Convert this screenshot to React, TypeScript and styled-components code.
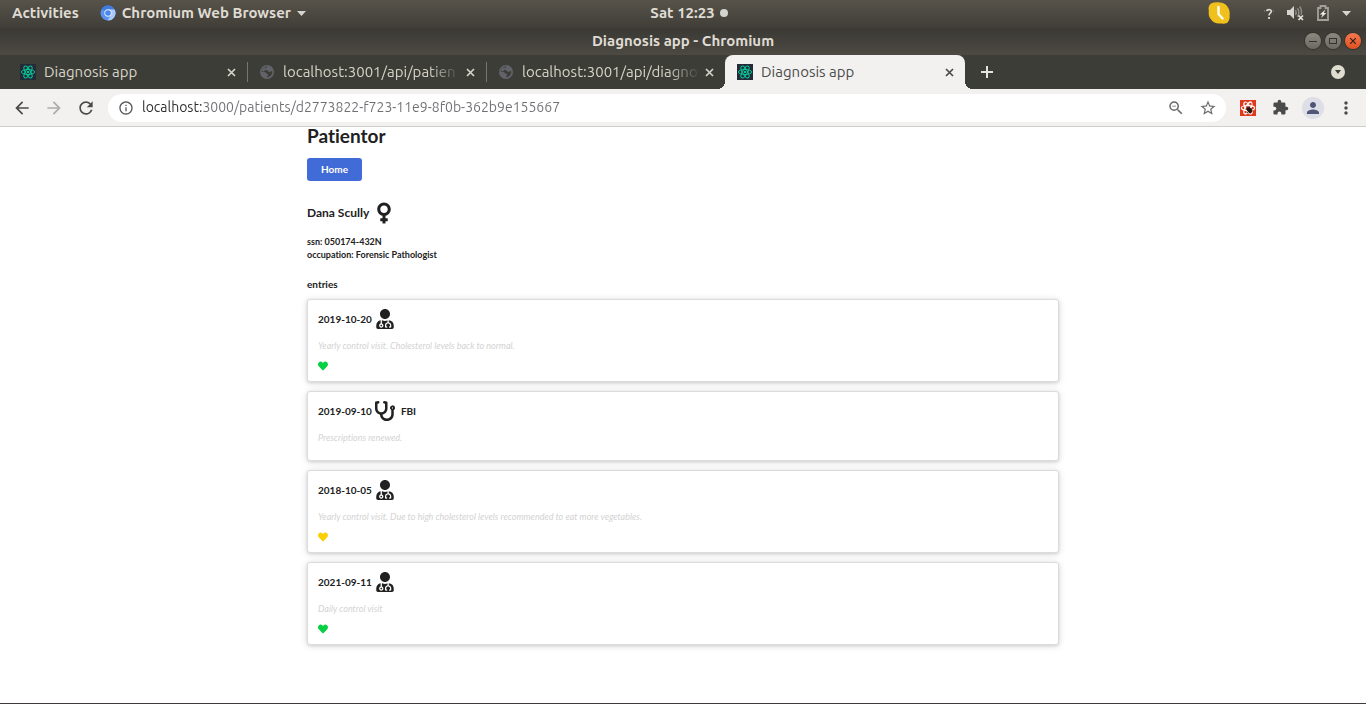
import React from "react";
import styled, { createGlobalStyle } from "styled-components";
import { FaHeart, FaStethoscope, FaUserMd, FaVenus } from "react-icons/fa";
import {
  MdArrowBack,
  MdArrowForward,
  MdExtension,
  MdInfoOutline,
  MdMoreVert,
  MdPerson,
  MdRefresh,
  MdStarBorder,
  MdZoomOut,
} from "react-icons/md";

const GlobalStyle = createGlobalStyle`
  *, *::before, *::after { box-sizing: border-box; }
  body { margin: 0; background: #fff; }
  button, input { font: inherit; color: inherit; }
  svg { display: block; flex: none; }
`;

const uiFont = `Ubuntu, "Noto Sans", sans-serif`;

const Screen = styled.div`
  display: flex;
  flex-direction: column;
  min-height: 100vh;
  border-bottom: 1px solid #403a3a;
  font-family: ${uiFont};
`;

/* ---------- desktop panel and window title ---------- */

const PlainButton = styled.button`
  display: flex;
  align-items: center;
  justify-content: center;
  flex: none;
  padding: 0;
  border: 0;
  background: none;
  cursor: pointer;
`;

const SystemBar = styled.header`
  display: grid;
  grid-template-columns: 1fr auto 1fr;
  align-items: center;
  height: 28px;
  padding: 0 15px 2px 12px;
  background: linear-gradient(#57534a, #403e38);
  color: #dfdbd2;
  font-size: 15px;
  font-weight: 700;
  line-height: 20px;
  white-space: nowrap;
`;

const SystemGroup = styled.div<{ $end?: boolean }>`
  display: flex;
  align-items: center;
  justify-content: ${(p) => (p.$end ? "flex-end" : "flex-start")};
  gap: ${(p) => (p.$end ? "13px" : "21px")};
`;

const AppMenu = styled(PlainButton)`
  gap: 6px;
`;

const Clock = styled(PlainButton)`
  gap: 5px;
  padding-left: 15px;
`;

const Dot = styled.span`
  width: 8px;
  height: 8px;
  border-radius: 50%;
  background: #d6d4ce;
`;

const TrackerButton = styled(PlainButton)`
  margin-right: 21px;
`;

const TitleBar = styled.div`
  display: grid;
  grid-template-columns: 1fr auto 1fr;
  align-items: center;
  height: 27px;
  padding: 0 5px 2px;
  background: linear-gradient(#3a3934, #4d4943);
  color: #dfdbd2;
  font-size: 15px;
  font-weight: 700;
  line-height: 20px;
`;

const WindowTitle = styled.span`
  grid-column: 2;
`;

const WindowButtons = styled.div`
  display: flex;
  justify-content: flex-end;
  gap: 4px;
`;

const WindowButton = styled(PlainButton)<{ $close?: boolean }>`
  width: 16px;
  height: 16px;
  border-radius: 50%;
  background: ${(p) =>
    p.$close
      ? "linear-gradient(#f4794f, #e0501f)"
      : "linear-gradient(#8b8980, #6b6962)"};
  box-shadow: 0 0 1px 1px #35332e;
`;

/* ---------- tabs ---------- */

const TabStrip = styled.nav`
  display: flex;
  align-items: center;
  height: 34px;
  padding: 0 20px 0 8px;
  background: #3d3d37;
  color: #d6d4c8;
`;

const Tab = styled.div<{ $active?: boolean; $divider?: boolean }>`
  position: relative;
  display: flex;
  align-items: center;
  flex: 0 1 ${(p) => (p.$active ? "240px" : "239px")};
  min-width: 0;
  height: 34px;
  padding: 0 9px 0 12px;
  border-radius: 8px 8px 0 0;
  background: ${(p) => (p.$active ? "#f2f1f0" : "transparent")};
  color: ${(p) => (p.$active ? "#4c4c4c" : "inherit")};

  ${(p) =>
    p.$divider &&
    `&::after {
      content: "";
      position: absolute;
      top: 7px;
      right: -1px;
      width: 1px;
      height: 20px;
      background: #77766f;
    }`}

  ${(p) =>
    p.$active &&
    `&::before, &::after {
      content: "";
      position: absolute;
      bottom: 0;
      width: 8px;
      height: 8px;
    }
    &::before {
      right: 100%;
      background: radial-gradient(circle at 0 0, transparent 8px, #f2f1f0 8px);
    }
    &::after {
      left: 100%;
      background: radial-gradient(circle at 100% 0, transparent 8px, #f2f1f0 8px);
    }`}
`;

const TabTitle = styled.a<{ $fade?: boolean }>`
  flex: 1;
  min-width: 0;
  margin: 0 2px 0 8px;
  overflow: hidden;
  color: inherit;
  font-size: 15px;
  line-height: 20px;
  text-decoration: none;
  white-space: nowrap;
  ${(p) =>
    p.$fade &&
    `mask-image: linear-gradient(to left, transparent, #000 32px);`}
`;

const TabClose = styled(PlainButton)`
  width: 14px;
  height: 16px;
`;

const NewTab = styled(PlainButton)`
  width: 28px;
  height: 28px;
  margin-left: 8px;
  color: #e4e2da;
`;

const TabSearch = styled(PlainButton)`
  width: 16px;
  height: 16px;
  margin-left: auto;
`;

/* ---------- toolbar ---------- */

const Toolbar = styled.div`
  display: flex;
  align-items: center;
  gap: 12px;
  height: 38px;
  padding: 0 10px 0 12px;
  border-bottom: 1px solid #cfcdca;
  background: #f2f1f0;
  color: #4a4a4a;
`;

const ToolButton = styled(PlainButton)<{ $muted?: boolean }>`
  width: 20px;
  height: 20px;
  color: ${(p) => (p.$muted ? "#adacab" : "inherit")};
`;

const AddressBar = styled.form`
  display: flex;
  align-items: center;
  flex: 1;
  gap: 12px;
  min-width: 0;
  height: 28px;
  padding: 0 8px 0 10px;
  border-radius: 14px;
  background: #fff;
  color: #6b6b6b;
`;

const SiteInfo = styled(PlainButton)`
  color: #55585c;
`;

/* The host part of the address is drawn darker than the rest. */
const AddressInput = styled.input`
  flex: 1;
  min-width: 0;
  height: 22px;
  margin-left: -4px;
  padding: 0 0 2px;
  border: 0;
  outline: 0;
  background: linear-gradient(to right, #2c2c2c 62px, #6f6f73 62px);
  background-clip: text;
  -webkit-background-clip: text;
  color: transparent;
  font-size: 14px;
  line-height: 20px;
`;

const Extensions = styled.div`
  display: flex;
  align-items: center;
  gap: 12px;
`;

const Avatar = styled(PlainButton)`
  width: 22px;
  height: 22px;
  border-radius: 50%;
  background: #dddee6;
  color: #50557a;
`;

/* ---------- page ---------- */

const Page = styled.main`
  flex: 1;
  width: 100%;
  max-width: 768px;
  margin: 0 auto;
  padding: 0 8px 56px;
  color: #212121;
  font-family: Lato, sans-serif;
  font-size: 10px;
  line-height: 13px;
  font-variant-ligatures: none;
`;

const Brand = styled.h1`
  margin: 0 0 14px;
  font-size: 19px;
  font-weight: 700;
  line-height: 17px;
`;

const HomeButton = styled.button`
  display: block;
  height: 23px;
  padding: 0 14px;
  border: 0;
  border-radius: 3px;
  background: #416bd6;
  color: #fff;
  font-weight: 700;
  cursor: pointer;
`;

const PatientName = styled.h2`
  display: flex;
  align-items: center;
  gap: 3px;
  height: 24px;
  margin: 20px 0 10px;
  font-size: 12px;
  font-weight: 700;
  line-height: 24px;
`;

const IconBox = styled.span<{ $width: number }>`
  display: flex;
  justify-content: center;
  width: ${(p) => p.$width}px;
`;

const Details = styled.p`
  margin: 0;
  font-size: 9px;
  font-weight: 700;
`;

const EntriesTitle = styled.h3`
  margin: 17px 0 8px;
  font-size: 10px;
  font-weight: 700;
`;

const EntryList = styled.div`
  display: flex;
  flex-direction: column;
  gap: 9px;
`;

const EntryCard = styled.article`
  padding: 9px 10px 10px;
  border: 1px solid #dcdcdc;
  border-radius: 3px;
  background: #fff;
  box-shadow: 0 1px 3px rgba(34, 36, 38, 0.12),
    0 1px 7px rgba(34, 36, 38, 0.15);
`;

const EntryHeader = styled.h4`
  display: flex;
  align-items: center;
  gap: 3px;
  height: 20px;
  margin: 0 0 10px;
  font-size: 10px;
  font-weight: 700;
`;

const Employer = styled.span`
  padding-left: 3px;
`;

const EntryText = styled.p`
  margin: 0;
  padding-bottom: 5px;
  color: #d3d3d3;
  font-size: 9px;
  font-style: italic;
  line-height: 14px;
`;

const Health = styled.div<{ $color: string }>`
  padding-top: 3px;
  color: ${(p) => p.$color};
`;

/* ---------- drawings ---------- */

const ChromiumIcon = () => (
  <svg width="16" height="16" viewBox="0 0 16 16">
    <circle cx="8" cy="8" r="7.5" fill="#5a93ee" />
    <path d="M8 8 1.5 4.2A7.5 7.5 0 0 1 14.5 4.4H8z" fill="#3f7be0" />
    <path d="M8 4.4h6.6A7.5 7.5 0 0 1 7.6 15.5L11 9.8z" fill="#a9c9f8" />
    <circle cx="8" cy="8" r="3.7" fill="#e3eefd" />
    <circle cx="8" cy="8" r="2.8" fill="#4c86ea" />
  </svg>
);

const Caret = () => (
  <svg width="9" height="5" viewBox="0 0 9 5">
    <path d="M0 0h9L4.500 5z" fill="#d6d4ce" />
  </svg>
);

const TrackerIcon = () => (
  <svg width="22" height="22" viewBox="0 0 22 22">
    <path
      d="M3 1.500C6 .2 9 0 12 .6c4 .3 6.500 2 8 5 1.500 2 2 5 1.600 8 .4 3-.6 6-2.600 7.400-2 1-4 .8-7 .6-4 .2-7-1-9-4C.8 15 .4 12 .8 9 .2 6 .5 3 3 1.500z"
      fill="#f0c11c"
    />
    <path
      d="M10.500 5v7l4 4.500"
      fill="none"
      stroke="#fffdf2"
      strokeWidth="2.400"
      strokeLinecap="round"
      strokeLinejoin="round"
    />
  </svg>
);

const HelpIcon = () => (
  <svg width="10" height="12" viewBox="0 0 10 12">
    <path
      d="M2.800 4.200C3 2.200 7.400 2 7.300 4.500 7.200 6.300 5 6.200 5 8.500"
      fill="none"
      stroke="#d6d4ce"
      strokeWidth="1.700"
    />
    <rect x="4.100" y="10" width="1.900" height="2" fill="#d6d4ce" />
    <path d="M0 4h1M9 4h1" stroke="#8f8c85" />
  </svg>
);

const VolumeIcon = () => (
  <svg width="17" height="16" viewBox="0 0 17 16">
    <path d="M0 5h3l4-4v13l-4-4H0z" fill="#d6d4ce" />
    <path
      d="M8.500 5q1.500 2.500 0 5M10.500 3.200q2.600 4.300 0 8.600M12.700 1.500q3 4.500 1 8.500"
      fill="none"
      stroke="#8f8c85"
      strokeWidth="1.400"
    />
    <path d="m11.500 10.500 4.500 4.500m0-4.500L11.500 15" stroke="#e6e4de" strokeWidth="1.700" />
  </svg>
);

const BatteryIcon = () => (
  <svg width="12" height="16" viewBox="0 0 12 16">
    <path
      d="M1 3h2.500V1h5v2H11v12H1z"
      fill="none"
      stroke="#a3a09a"
      strokeWidth="1.800"
    />
    <path d="M8.500 4.500 2.800 9.500h2.700l-1.500 3.500 5.300-5H6.800z" fill="#f0eee8" />
  </svg>
);

const CrossIcon = ({ size = 9 }: { size?: number }) => (
  <svg width={size} height={size} viewBox="0 0 9 9">
    <path d="m1 1 7 7m0-7L1 8" stroke="currentColor" strokeWidth="1.700" />
  </svg>
);

const GlobeIcon = () => (
  <svg width="16" height="16" viewBox="0 0 16 16">
    <circle cx="8" cy="8" r="7" fill="#62636a" />
    <path
      d="M8.500 2.600C8 4 6.600 3.800 6.400 5.200c-.1 1 1.400.9 2.200 1.200.9.400.5 1.400 1.500 1.500 1.300.1 1.700-.9 3.300-.6.100 2-.8 3.800-2.400 4.900-.9.700-2 1-3.200 1 .2-1.300 1.300-1.200 1.300-2.300 0-1-1-.7-1.700-1.300C6.700 9 6.500 8.200 5.400 8.100L2.500 7.800c.1-3 2.600-5.400 6-5.200z"
      fill="#3d3d37"
    />
    <path d="M3.800 4.600 6.600 3v2.500L4.800 7.500 2.800 7z" fill="#62636a" />
  </svg>
);

const Atom = ({ color, width = 1 }: { color: string; width?: number }) => (
  <g fill="none" stroke={color} strokeWidth={width}>
    <ellipse cx="8" cy="8" rx="6.700" ry="2.500" />
    <ellipse cx="8" cy="8" rx="6.700" ry="2.500" transform="rotate(60 8 8)" />
    <ellipse cx="8" cy="8" rx="6.700" ry="2.500" transform="rotate(120 8 8)" />
    <circle cx="8" cy="8" r="1.200" fill={color} stroke="none" />
  </g>
);

const ReactFavicon = () => (
  <svg width="16" height="16" viewBox="0 0 16 16">
    <rect width="16" height="16" fill="#252a38" />
    <Atom color="#05c797" />
  </svg>
);

const DevToolsIcon = () => (
  <svg width="16" height="16" viewBox="0 0 16 16">
    <rect width="16" height="16" fill="#e0371d" />
    <Atom color="#fff" width={1.2} />
    <ellipse cx="9.500" cy="10" rx="2.300" ry="3.300" fill="#251512" transform="rotate(-40 9.500 10)" />
    <path
      d="m5.500 9 6.500 2.500M7 13l5.500-5M9.500 6.500l.5 7M6.500 6.500l2 2"
      stroke="#251512"
      strokeWidth=".8"
    />
  </svg>
);

/* ---------- data ---------- */

interface TabInfo {
  title: string;
  react?: boolean;
  active?: boolean;
  divider?: boolean;
}

const tabs: TabInfo[] = [
  { title: "Diagnosis app", react: true, divider: true },
  { title: "localhost:3001/api/patien", divider: true },
  { title: "localhost:3001/api/diagno" },
  { title: "Diagnosis app", react: true, active: true },
];

interface Entry {
  date: string;
  text: string;
  employer?: string;
  health?: string;
}

const green = "#06d043";
const yellow = "#fbcf07";

const entries: Entry[] = [
  {
    date: "2019-10-20",
    text: "Yearly control visit. Cholesterol levels back to normal.",
    health: green,
  },
  { date: "2019-09-10", text: "Prescriptions renewed.", employer: "FBI" },
  {
    date: "2018-10-05",
    text: "Yearly control visit. Due to high cholesterol levels recommended to eat more vegetables.",
    health: yellow,
  },
  { date: "2021-09-11", text: "Daily control visit", health: green },
];

export default function App() {
  return (
    <Screen>
      <GlobalStyle />
      <SystemBar>
        <SystemGroup>
          <PlainButton>Activities</PlainButton>
          <AppMenu>
            <ChromiumIcon />
            Chromium Web Browser
            <Caret />
          </AppMenu>
        </SystemGroup>
        <Clock>
          Sat 12:23
          <Dot />
        </Clock>
        <SystemGroup $end>
          <TrackerButton aria-label="Time tracker">
            <TrackerIcon />
          </TrackerButton>
          <PlainButton aria-label="Help">
            <HelpIcon />
          </PlainButton>
          <PlainButton aria-label="Volume">
            <VolumeIcon />
          </PlainButton>
          <PlainButton aria-label="Battery">
            <BatteryIcon />
          </PlainButton>
          <PlainButton aria-label="System menu">
            <Caret />
          </PlainButton>
        </SystemGroup>
      </SystemBar>

      <TitleBar>
        <WindowTitle>Diagnosis app - Chromium</WindowTitle>
        <WindowButtons>
          <WindowButton aria-label="Minimize">
            <svg width="8" height="8" viewBox="0 0 8 8">
              <path d="M0 4.500h8" stroke="#35332e" />
            </svg>
          </WindowButton>
          <WindowButton aria-label="Maximize">
            <svg width="8" height="8" viewBox="0 0 8 8">
              <rect x=".5" y="1.500" width="7" height="5" fill="none" stroke="#35332e" />
            </svg>
          </WindowButton>
          <WindowButton $close aria-label="Close window">
            <svg width="6" height="6" viewBox="0 0 6 6">
              <path d="m0 0 6 6m0-6L0 6" stroke="#35201a" strokeWidth="1.200" />
            </svg>
          </WindowButton>
        </WindowButtons>
      </TitleBar>

      <TabStrip>
        {tabs.map((tab, i) => (
          <Tab key={i} $active={tab.active} $divider={tab.divider}>
            {tab.react ? <ReactFavicon /> : <GlobeIcon />}
            <TabTitle href="#" $fade={!tab.react}>
              {tab.title}
            </TabTitle>
            <TabClose aria-label="Close tab">
              <CrossIcon />
            </TabClose>
          </Tab>
        ))}
        <NewTab aria-label="New tab">
          <svg width="12" height="12" viewBox="0 0 12 12">
            <path d="M6 0v12M0 6h12" stroke="currentColor" strokeWidth="2" />
          </svg>
        </NewTab>
        <TabSearch aria-label="Search tabs">
          <svg width="14" height="14" viewBox="0 0 14 14">
            <circle cx="7" cy="7" r="7" fill="#deddd0" />
            <path d="M4 5h6L7 9z" fill="#3d3d37" />
          </svg>
        </TabSearch>
      </TabStrip>

      <Toolbar>
        <ToolButton aria-label="Back">
          <MdArrowBack size={20} />
        </ToolButton>
        <ToolButton $muted aria-label="Forward">
          <MdArrowForward size={20} />
        </ToolButton>
        <ToolButton aria-label="Reload">
          <MdRefresh size={20} />
        </ToolButton>
        <AddressBar>
          <SiteInfo type="button" aria-label="Site information">
            <MdInfoOutline size={16} />
          </SiteInfo>
          <AddressInput
            aria-label="Address"
            defaultValue="localhost:3000/patients/d2773822-f723-11e9-8f0b-362b9e155667"
          />
          <ToolButton type="button" aria-label="Zoom">
            <MdZoomOut size={18} />
          </ToolButton>
          <ToolButton type="button" aria-label="Bookmark">
            <MdStarBorder size={18} />
          </ToolButton>
        </AddressBar>
        <Extensions>
          <ToolButton aria-label="React developer tools">
            <DevToolsIcon />
          </ToolButton>
          <ToolButton aria-label="Extensions">
            <MdExtension size={17} />
          </ToolButton>
          <Avatar aria-label="Profile">
            <MdPerson size={18} />
          </Avatar>
          <ToolButton aria-label="Menu">
            <MdMoreVert size={20} />
          </ToolButton>
        </Extensions>
      </Toolbar>

      <Page>
        <Brand>Patientor</Brand>
        <HomeButton>Home</HomeButton>
        <PatientName>
          Dana Scully
          <IconBox $width={24}>
            <FaVenus size={24} />
          </IconBox>
        </PatientName>
        <Details>ssn: 050174-432N</Details>
        <Details>occupation: Forensic Pathologist</Details>
        <EntriesTitle>entries</EntriesTitle>
        <EntryList>
          {entries.map((entry) => (
            <EntryCard key={entry.date}>
              <EntryHeader>
                {entry.date}
                <IconBox $width={20}>
                  {entry.employer ? (
                    <FaStethoscope size={20} />
                  ) : (
                    <FaUserMd size={20} />
                  )}
                </IconBox>
                {entry.employer && <Employer>{entry.employer}</Employer>}
              </EntryHeader>
              <EntryText>{entry.text}</EntryText>
              {entry.health && (
                <Health $color={entry.health}>
                  <FaHeart size={10} />
                </Health>
              )}
            </EntryCard>
          ))}
        </EntryList>
      </Page>
    </Screen>
  );
}
